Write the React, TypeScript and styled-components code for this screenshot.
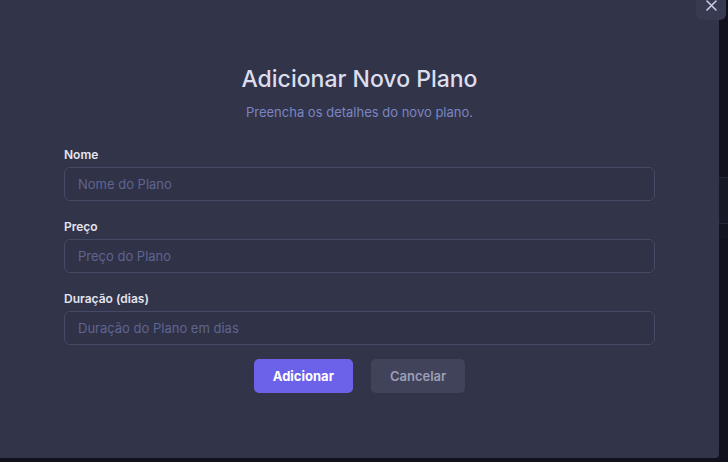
import React, { FunctionComponent } from 'react';
import styled, { createGlobalStyle } from 'styled-components';

const GlobalStyle = createGlobalStyle`
  html, body {
    margin: 0;
    padding: 0;
    background: #10111c;
    font-family: Inter, "Noto Sans", sans-serif;
    overflow: hidden;
  }
`;

const Page = styled.div`
  position: relative;
  display: flex;
  width: 728px;
  height: 462px;
  background: #10111c;
`;

const Modal = styled.div`
  width: 719px;
  height: 458px;
  box-sizing: border-box;
  padding: 65px 64px 0;
  background: #323449;
  border-radius: 0 0 4px 0;
  display: flex;
  flex-direction: column;
`;

const Backdrop = styled.div`
  flex: 1;
  display: flex;
  flex-direction: column;
  padding-top: 177px;
`;

const BackdropRow = styled.div<{ $h: number; $tone: string }>`
  height: ${p => p.$h}px;
  background: ${p => p.$tone};
  border-top: 1px solid #24263a;
`;

const CloseButton = styled.button`
  position: absolute;
  top: -8px;
  right: 2px;
  width: 30px;
  height: 28px;
  padding: 8px 0 0;
  border: none;
  border-radius: 6px;
  background: #383a52;
  color: #c9cbe2;
  display: flex;
  justify-content: center;
  cursor: pointer;
`;

const Title = styled.h2`
  margin: 0;
  text-align: center;
  font-size: 23px;
  line-height: 28px;
  font-weight: 500;
  color: #dcdeee;
`;

const Subtitle = styled.p`
  margin: 10px 0 26px;
  text-align: center;
  font-size: 13px;
  line-height: 18px;
  color: #7c85c2;
`;

const Form = styled.form`
  display: flex;
  flex-direction: column;
  gap: 18px;
`;

const Field = styled.div`
  display: flex;
  flex-direction: column;
  gap: 4px;
`;

const Label = styled.label`
  font-size: 12px;
  line-height: 16px;
  font-weight: 600;
  color: #e3e4f0;
`;

const Input = styled.input`
  height: 34px;
  box-sizing: border-box;
  padding: 0 13px;
  border: 1px solid #464a67;
  border-radius: 6px;
  background: #303247;
  color: #e3e4f0;
  font-family: inherit;
  font-size: 13px;
  outline: none;

  &::placeholder {
    color: #5f6590;
  }
`;

const Actions = styled.div`
  display: flex;
  justify-content: center;
  gap: 18px;
  margin-top: 14px;
`;

const Button = styled.button<{ $primary?: boolean }>`
  height: 34px;
  padding: 0 19px;
  border: none;
  border-radius: 5px;
  font-family: inherit;
  font-size: 13px;
  font-weight: ${p => (p.$primary ? 700 : 600)};
  color: ${p => (p.$primary ? '#ffffff' : '#9c9fb6')};
  background: ${p => (p.$primary ? '#6c62e9' : '#41435a')};
  cursor: pointer;
`;

const fields = [
  { id: 'nome', label: 'Nome', placeholder: 'Nome do Plano' },
  { id: 'preco', label: 'Preço', placeholder: 'Preço do Plano' },
  { id: 'duracao', label: 'Duração (dias)', placeholder: 'Duração do Plano em dias' },
];

const App: FunctionComponent = () => (
  <>
    <GlobalStyle />
    <Page>
      <Modal>
        <Title>Adicionar Novo Plano</Title>
        <Subtitle>Preencha os detalhes do novo plano.</Subtitle>
        <Form onSubmit={e => e.preventDefault()}>
          {fields.map(f => (
            <Field key={f.id}>
              <Label htmlFor={f.id}>{f.label}</Label>
              <Input id={f.id} placeholder={f.placeholder} />
            </Field>
          ))}
        </Form>
        <Actions>
          <Button $primary>Adicionar</Button>
          <Button>Cancelar</Button>
        </Actions>
      </Modal>
      <Backdrop>
        <BackdropRow $h={45} $tone="#161826" />
        <BackdropRow $h={15} $tone="#131421" />
      </Backdrop>
      <CloseButton aria-label="Fechar">
        <svg width="11" height="11" viewBox="0 0 11 11" fill="none">
          <path d="M1 1L10 10M10 1L1 10" stroke="currentColor" strokeWidth="1.6" strokeLinecap="round" />
        </svg>
      </CloseButton>
    </Page>
  </>
);

export default App;
